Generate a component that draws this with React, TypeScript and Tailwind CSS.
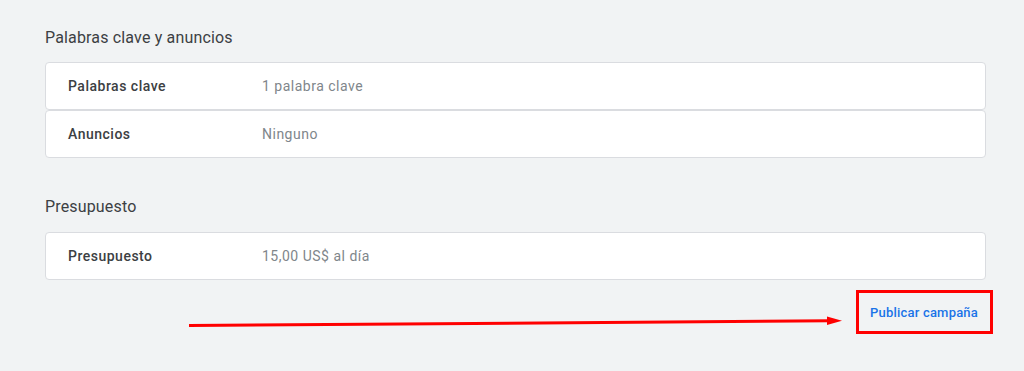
const rows1 = [
  { label: "Palabras clave", value: "1 palabra clave" },
  { label: "Anuncios", value: "Ninguno" },
];

function SummaryRow({ label, value }: { label: string; value: string }) {
  return (
    <div className="flex h-[48px] items-center rounded-[4px] border border-[#dadce0] bg-white px-[22px] text-[14px] tracking-[0.5px]">
      <span className="w-[194px] font-medium text-[#3c4043]">{label}</span>
      <span className="text-[#80868b]">{value}</span>
    </div>
  );
}

export default function App() {
  return (
    <main
      className="relative h-[371px] w-[1024px] overflow-hidden bg-[#f1f3f4] pl-[45px] pr-[38px] pt-[26px]"
      style={{ fontFamily: "Roboto, 'Liberation Sans', sans-serif" }}
    >
      <h2 className="h-[24px] text-[16px] leading-[24px] tracking-[0.16px] text-[#3c4043]">
        Palabras clave y anuncios
      </h2>
      <div className="mt-[12px] flex flex-col">
        {rows1.map((row) => (
          <SummaryRow key={row.label} {...row} />
        ))}
      </div>

      <h2 className="mt-[37px] h-[24px] text-[16px] leading-[24px] tracking-[0.16px] text-[#3c4043]">Presupuesto</h2>
      <div className="mt-[13px]">
        <SummaryRow label="Presupuesto" value="15,00 US$ al día" />
      </div>

      <div className="mt-[15px] flex justify-end">
        <button className="h-[36px] rounded-[4px] px-[8px] text-[13px] font-medium tracking-[0.2px] text-[#1a73e8]">
          Publicar campaña
        </button>
      </div>

      {/* annotation */}
      <div className="absolute left-[856px] top-[290px] h-[44px] w-[137px] border-[3px] border-[#ff0000]" />
      <svg className="absolute left-0 top-0" width="1024" height="371">
        <line x1="189" y1="325.5" x2="830" y2="320.8" stroke="#ff0000" strokeWidth="3" />
        <polygon points="827,316.5 842,320.7 827,325" fill="#ff0000" />
      </svg>
    </main>
  );
}
